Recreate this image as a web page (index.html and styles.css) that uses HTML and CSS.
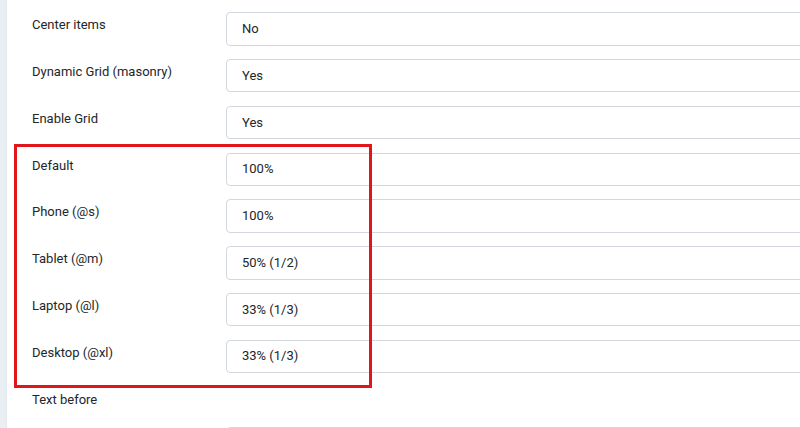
FILE: index.html
```html
<!DOCTYPE html>
<html lang="en">
<head>
<meta charset="utf-8">
<title>Grid options</title>
<link rel="stylesheet" href="styles.css">
</head>
<body>
<div class="page">
  <div class="strip"></div>
  <div class="panel">
    <div class="row"><label class="label">Center items</label><div class="field">No</div></div>
    <div class="row"><label class="label">Dynamic Grid (masonry)</label><div class="field">Yes</div></div>
    <div class="row"><label class="label">Enable Grid</label><div class="field">Yes</div></div>
    <div class="row"><label class="label">Default</label><div class="field">100%</div></div>
    <div class="row"><label class="label">Phone (@s)</label><div class="field">100%</div></div>
    <div class="row"><label class="label">Tablet (@m)</label><div class="field">50% (1/2)</div></div>
    <div class="row"><label class="label">Laptop (@l)</label><div class="field">33% (1/3)</div></div>
    <div class="row"><label class="label">Desktop (@xl)</label><div class="field">33% (1/3)</div></div>
    <div class="row"><label class="label">Text before</label><div class="field field-low"></div></div>
    <div class="highlight"></div>
  </div>
</div>
</body>
</html>
```

FILE: styles.css
```css
html, body {
  margin: 0;
  padding: 0;
  background: #ffffff;
  overflow: hidden;
}
body {
  font-family: Roboto, "Liberation Sans", Arial, sans-serif;
  color: #22262a;
}
.page {
  display: flex;
  height: 428px;
  overflow: hidden;
}
.strip {
  width: 6px;
  flex: none;
  background: #eaeff4;
  border-right: 1px solid #e3e8ee;
}
.panel {
  position: relative;
  flex: 1;
  background: #ffffff;
  padding-top: 12.3px;
}
.row {
  display: grid;
  grid-template-columns: 194px 1fr;
  padding-left: 25px;
  margin-bottom: 13.4px;
  align-items: start;
}
.label {
  font-size: 13px;
  line-height: 15px;
  padding-top: 5px;
  color: #22262a;
}
.field {
  height: 33.4px;
  box-sizing: border-box;
  border: 1px solid #d3d8de;
  border-radius: 4px;
  padding-left: 15px;
  padding-bottom: 1px;
  margin-right: -20px;
  display: flex;
  align-items: center;
  font-size: 13px;
  color: #22262a;
  background: #ffffff;
}
.field-low {
  margin-top: 40px;
}
.highlight {
  position: absolute;
  left: 7px;
  top: 144px;
  width: 358px;
  height: 244px;
  box-sizing: border-box;
  border: 3px solid #e0161b;
}
```
